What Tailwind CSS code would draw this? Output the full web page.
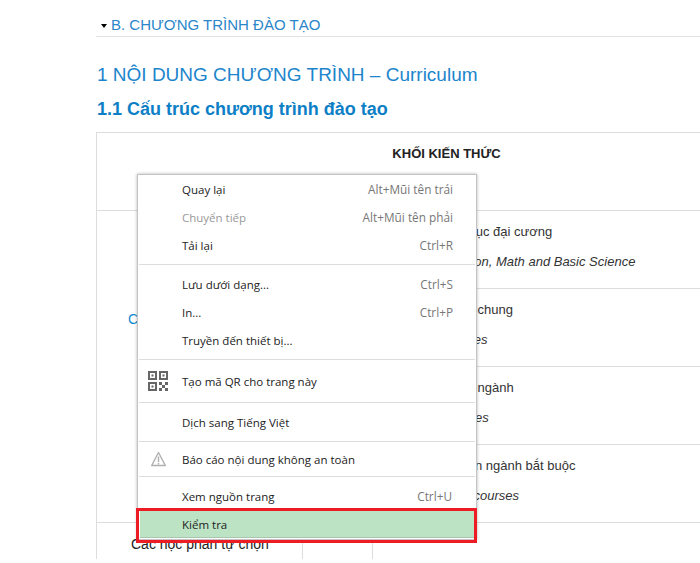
<!DOCTYPE html>
<html lang="vi">
<head>
<meta charset="UTF-8">
<title>Chương trình đào tạo</title>
<script src="https://cdn.jsdelivr.net/npm/@tailwindcss/browser@4"></script>
</head>
<body class="bg-white font-['Liberation_Sans',Arial,sans-serif] text-[#333]">
<div class="relative h-[563px] w-[700px] overflow-hidden pl-[96px]">

  <!-- section heading -->
  <div class="flex h-[37px] w-[604px] items-end border-b border-[#e2e2e2] pb-[1px]">
    <span class="mb-[7px] ml-[5px] mr-[4px] h-0 w-0 border-x-[3.5px] border-t-[4px] border-x-transparent border-t-black"></span>
    <span class="text-[15px] leading-[20px] text-[#2b86c9]">B. CHƯƠNG TRÌNH ĐÀO TẠO</span>
  </div>
  <h2 class="mt-[26px] pl-[1px] text-[19px] leading-[24px] text-[#1c85cc]">1 NỘI DUNG CHƯƠNG TRÌNH – Curriculum</h2>
  <h3 class="mt-[10px] pl-[1px] text-[18px] font-bold leading-[24px] text-[#0d7fc6]">1.1 Cấu trúc chương trình đào tạo</h3>

  <table class="mt-[11px] w-[700px] table-fixed border-collapse text-[13px] leading-[18px]">
    <colgroup><col class="w-[206px]"><col class="w-[70px]"><col class="w-[424px]"></colgroup>
    <tr class="h-[78px]">
      <td colspan="3" class="border border-[#ddd] pb-[36px] text-center text-[13px] font-bold text-[#222]">KHỐI KIẾN THỨC</td>
    </tr>
    <tr class="h-[78px]">
      <td colspan="2" rowspan="4" class="border border-[#ddd] pb-[96px] pl-[31px] text-[14px] text-[#0f8ad0]">Các học phần bắt buộc</td>
      <td class="border border-[#ddd] pb-[6px] pl-[8px]"><p>Kiến thức giáo dục đại cương</p><p class="mt-[12px] italic">General Education, Math and Basic Science</p></td>
    </tr>
    <tr class="h-[78px]">
      <td class="border border-[#ddd] pb-[6px] pl-[8px]"><p>Kiến thức cơ sở chung</p><p class="mt-[12px] italic">Technical Courses</p></td>
    </tr>
    <tr class="h-[78px]">
      <td class="border border-[#ddd] pb-[6px] pl-[8px]"><p>Kiến thức cơ sở ngành</p><p class="mt-[12px] italic">Discipline Courses</p></td>
    </tr>
    <tr class="h-[78px]">
      <td class="border border-[#ddd] pb-[6px] pl-[8px]"><p>Kiến thức chuyên ngành bắt buộc</p><p class="mt-[12px] italic">Required major courses</p></td>
    </tr>
    <tr class="h-[36px]">
      <td class="border-x border-t border-[#ddd] pl-[34px] pt-[12px] align-top text-[14px] text-[#222]">Các học phần tự chọn</td>
      <td class="border-x border-t border-[#ddd]"></td>
      <td class="border-x border-t border-[#ddd]"></td>
    </tr>
  </table>

  <!-- context menu -->
  <div class="absolute left-[137px] top-[174px] h-[366px] w-[340px] border border-[#c4c4c4] bg-white pl-px font-['Open_Sans',sans-serif] text-[11.5px] text-[#222] shadow-[0_0_3px_rgba(0,0,0,0.3)]">
    <div class="flex h-[28px] items-center justify-between pl-[43px] pr-[23px] pt-[2px]"><span>Quay lại</span><span class="text-[11.8px] text-[#777]">Alt+Mũi tên trái</span></div>
    <div class="flex h-[28px] items-center justify-between pl-[43px] pr-[23px] pt-[2px] text-[#999]"><span>Chuyển tiếp</span><span class="text-[11.8px] text-[#777]">Alt+Mũi tên phải</span></div>
    <div class="flex h-[28px] items-center justify-between pl-[43px] pr-[23px] pt-[2px]"><span>Tải lại</span><span class="text-[11.8px] text-[#777]">Ctrl+R</span></div>
    <div class="mr-px mt-[5px] mb-[5px] h-px bg-[#ddd]"></div>
    <div class="flex h-[28px] items-center justify-between pl-[43px] pr-[23px] pt-[2px]"><span>Lưu dưới dạng...</span><span class="text-[11.8px] text-[#777]">Ctrl+S</span></div>
    <div class="flex h-[28px] items-center justify-between pl-[43px] pr-[23px] pt-[2px]"><span>In...</span><span class="text-[11.8px] text-[#777]">Ctrl+P</span></div>
    <div class="flex h-[28px] items-center justify-between pl-[43px] pr-[23px] pt-[2px]"><span>Truyền đến thiết bị...</span></div>
    <div class="mr-px mt-[5px] h-px bg-[#ddd]"></div>
    <div class="flex h-[42px] items-center pl-[9px]">
      <svg class="mr-[14px] h-[20px] w-[20px]" viewBox="0 0 20 20" fill="#666">
        <path fill-rule="evenodd" d="M0 0h9v9H0zM2 2v5h5V2zM11 0h9v9h-9zM13 2v5h5V2zM0 11h9v9H0zM2 13v5h5v-5z"/>
        <path d="M3.5 3.5h2v2h-2zM14.5 3.5h2v2h-2zM3.5 14.5h2v2h-2zM11 11h3v3h-3zM17 11h3v3h-3zM14 14h3v3h-3zM11 17h3v3h-3zM17 17h3v3h-3z"/>
      </svg>
      <span class="pt-[2px]">Tạo mã QR cho trang này</span>
    </div>
    <div class="mr-px h-px bg-[#ddd]"></div>
    <div class="flex h-[38px] items-center pl-[43px] pt-[2px]">Dịch sang Tiếng Việt</div>
    <div class="mr-px h-px bg-[#ddd]"></div>
    <div class="flex h-[34px] items-center pl-[12px]">
      <svg class="mr-[16px] h-[16px] w-[15px]" viewBox="0 0 15 16" fill="none" stroke="#b0b0b0" stroke-width="1.4">
        <path d="M7.5 1.5 14.3 14.5H.7z" stroke-linejoin="round"/>
        <path d="M7.5 5.5v5.5M7.5 12v1.5"/>
      </svg>
      <span class="pt-[2px]">Báo cáo nội dung không an toàn</span>
    </div>
    <div class="mr-px h-px bg-[#ddd]"></div>
    <div class="mt-[5px] flex h-[28px] items-center justify-between pl-[43px] pr-[24px] pt-[2px]"><span>Xem nguồn trang</span><span class="text-[11.8px] text-[#777]">Ctrl+U</span></div>
    <div class="ml-px mr-[2px] flex h-[28px] items-center border-b border-[#a9c4b0] bg-[#bbe3c4] pl-[42px] pt-[2px]">Kiểm tra</div>
  </div>

  <!-- red highlight over the last item -->
  <div class="absolute left-[136px] top-[508px] h-[35px] w-[341px] border-[3px] border-[#ed1c24]"></div>
</div>
</body>
</html>
